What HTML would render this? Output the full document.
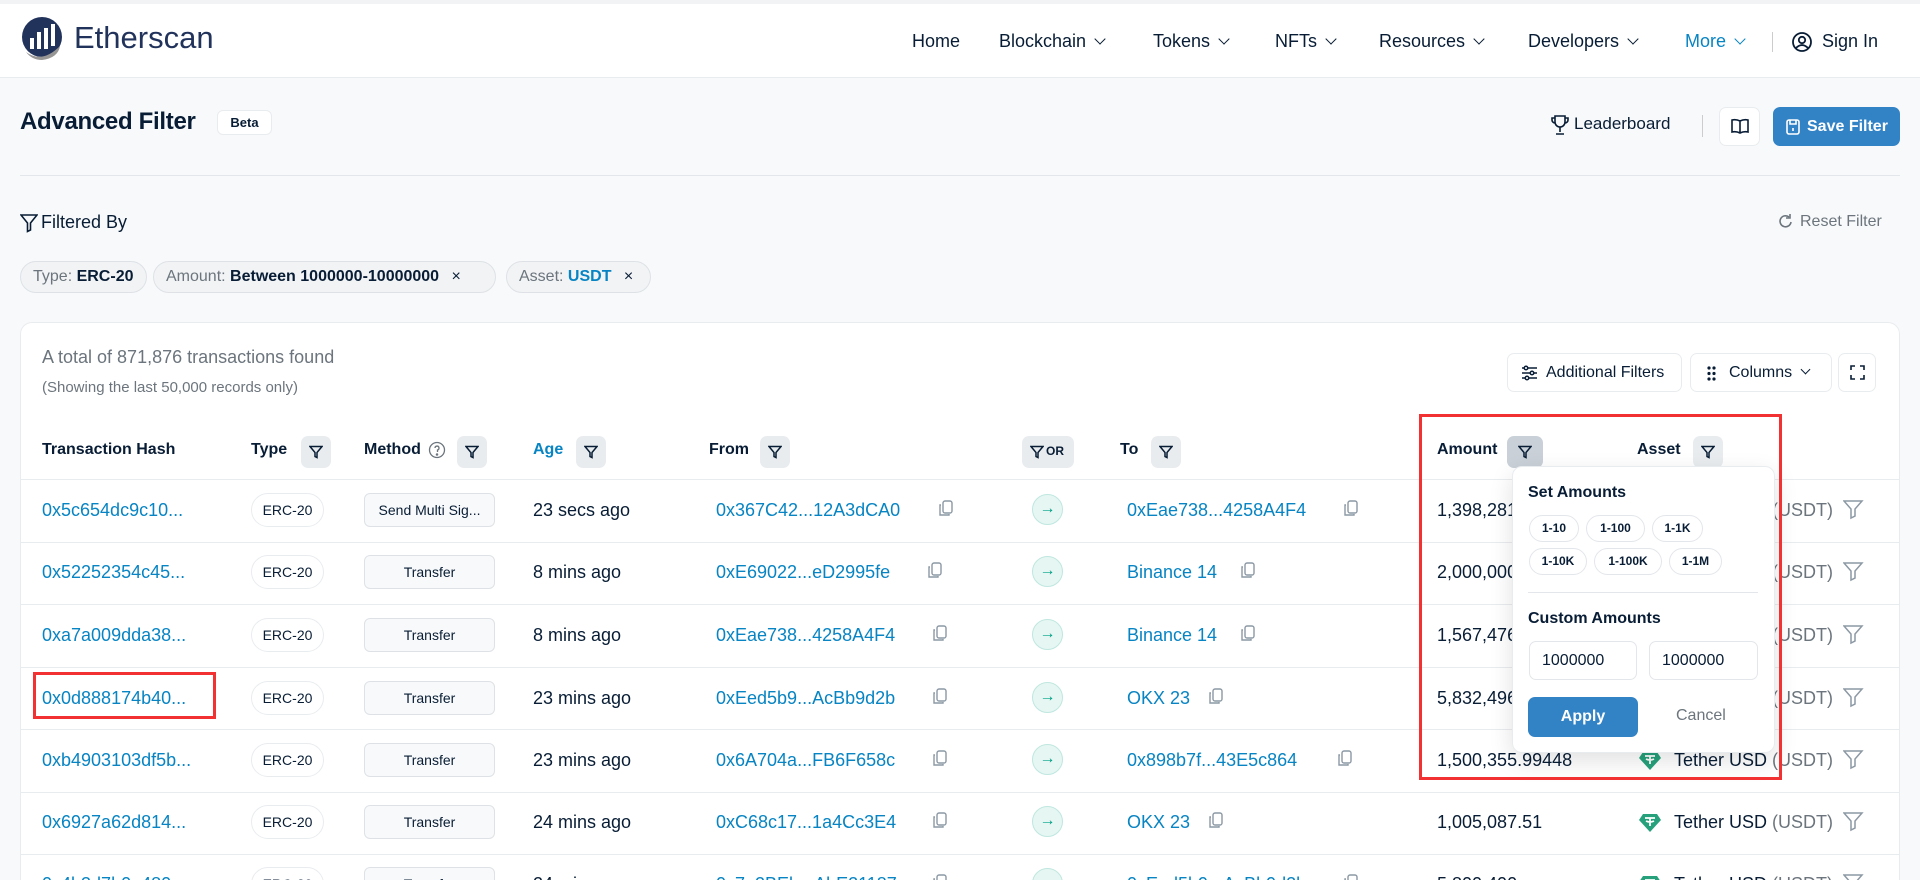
<!DOCTYPE html>
<html style="width:1920px;height:880px;overflow:hidden"><head><meta charset="utf-8">
<style>
*{box-sizing:border-box;margin:0;padding:0}
body{width:1920px;height:880px;overflow:hidden;background:#f8f9fa;font-family:"Liberation Sans",Arial,sans-serif;color:#081d35;position:relative}
.a{position:absolute;white-space:nowrap}
.nav{position:absolute;left:0;top:0;width:1920px;height:78px;background:#fff;border-bottom:1px solid #e9ecef;border-top:4px solid #f1f3f5}
.ni{position:absolute;top:27px;font-size:18px;color:#081d35}
.chev{display:inline-block;width:8px;height:8px;border-right:1.8px solid currentColor;border-bottom:1.8px solid currentColor;transform:rotate(45deg);margin-left:10px;position:relative;top:-4px}
.chip{position:absolute;top:261px;height:32px;border:1px solid #dee2e6;border-radius:16px;background:#f1f3f5;font-size:16px;line-height:30px;padding-left:12px;color:#6c757d}
.chip b{color:#081d35}
.card{position:absolute;left:20px;top:322px;width:1880px;height:558px;background:#fff;border:1px solid #e9ecef;border-bottom:none;border-radius:12px 12px 0 0}
.btn{position:absolute;height:39px;border:1px solid #e9ecef;border-radius:7px;background:#fff;font-size:16px;line-height:37px;color:#081d35}
.th{position:absolute;top:441px;font-size:16px;font-weight:bold;color:#081d35}
.fb{position:absolute;top:436px;width:30px;height:32px;background:#e9ecef;border-radius:7px}
.fb svg{position:absolute;left:8px;top:9px}
.rl{position:absolute;left:20px;width:1880px;height:1px;background:#e9ecef}
.lk{color:#0784c3}
.td{position:absolute;font-size:18px;line-height:22px}
.badge{position:absolute;left:251px;width:73px;height:34px;border:1px solid #e9ecef;border-radius:17px;font-size:14px;text-align:center;line-height:32px;background:#fff}
.meth{position:absolute;left:364px;width:131px;height:34px;border:1px solid #dee2e6;border-radius:6px;font-size:14px;text-align:center;line-height:32px;background:#f8f9fa}
.arr{position:absolute;left:1032px;width:31px;height:31px;border-radius:50%;background:#e6f6f3;border:1px solid #bfe7df;color:#00a186;text-align:center;line-height:28px;font-size:16px}
.cp{position:absolute}
.pill{position:absolute;height:27px;border:1px solid #e3e6ea;border-radius:14px;font-size:12px;font-weight:bold;text-align:center;line-height:25px;background:#fff}
</style></head><body>

<div class="nav">
  <svg class="a" style="left:20px;top:12px" width="46" height="46" viewBox="0 0 46 46">
    <circle cx="22" cy="21" r="20" fill="#21325b"/>
    <path d="M6 36 Q22 48 40 30 Q38 42 22 44 Q12 44 6 36Z" fill="#979695"/>
    <rect x="10" y="22" width="4" height="11" fill="#fff"/><rect x="17" y="16" width="4" height="17" fill="#fff"/><rect x="24" y="12" width="4" height="21" fill="#fff"/><rect x="31" y="8" width="4" height="22" fill="#fff"/>
  </svg>
  <div class="a" style="left:74px;top:16px;font-size:31px;color:#21325b">Etherscan</div>
  <div class="ni" style="left:912px">Home</div>
  <div class="ni" style="left:999px">Blockchain<span class="chev"></span></div>
  <div class="ni" style="left:1153px">Tokens<span class="chev"></span></div>
  <div class="ni" style="left:1275px">NFTs<span class="chev"></span></div>
  <div class="ni" style="left:1379px">Resources<span class="chev"></span></div>
  <div class="ni" style="left:1528px">Developers<span class="chev"></span></div>
  <div class="ni" style="left:1685px;color:#0784c3">More<span class="chev"></span></div>
  <div class="a" style="left:1772px;top:28px;width:1px;height:20px;background:#ccc"></div>
  <svg class="a" style="left:1791px;top:27px" width="22" height="22" viewBox="0 0 22 22" fill="none" stroke="#081d35" stroke-width="1.8"><circle cx="11" cy="11" r="9"/><circle cx="11" cy="9" r="3.2"/><path d="M5 17 Q11 11 17 17"/></svg>
  <div class="ni" style="left:1822px">Sign In</div>
</div>

<div class="a" style="left:20px;top:108px;font-size:24px;font-weight:bold;color:#081d35;letter-spacing:-0.3px">Advanced Filter</div>
<div class="a" style="left:217px;top:110px;width:55px;height:25px;background:#fff;border:1px solid #e9ecef;border-radius:6px;font-size:13px;font-weight:bold;text-align:center;line-height:23px">Beta</div>

<svg class="a" style="left:1550px;top:114px" width="20" height="22" viewBox="0 0 20 22" fill="none" stroke="#081d35" stroke-width="1.6"><path d="M5 2h10v6a5 5 0 0 1-10 0z"/><path d="M5 4H2v2a3 3 0 0 0 3 3M15 4h3v2a3 3 0 0 1-3 3M10 13v5M6 20h8"/></svg>
<div class="a" style="left:1574px;top:114px;font-size:17px">Leaderboard</div>
<div class="a" style="left:1702px;top:115px;width:1px;height:22px;background:#ccc"></div>
<div class="btn" style="left:1719px;top:107px;width:41px"><svg style="position:absolute;left:11px;top:10px" width="18" height="17" viewBox="0 0 18 17" fill="none" stroke="#081d35" stroke-width="1.6"><path d="M9 3Q5 1 1 2v12q4-1 8 1q4-2 8-1V2q-4-1-8 1v12"/></svg></div>
<div class="a" style="left:1773px;top:107px;width:127px;height:39px;background:#3283c6;border-radius:7px;color:#fff;font-size:16px;font-weight:bold;line-height:39px;padding-left:34px">Save Filter
  <svg style="position:absolute;left:13px;top:12px" width="14" height="16" viewBox="0 0 14 16" fill="none" stroke="#fff" stroke-width="1.6"><rect x="1" y="1" width="12" height="14" rx="2"/><path d="M4 1v4h6V1M7 9v3"/></svg></div>

<div class="a" style="left:20px;top:175px;width:1880px;height:1px;background:#e3e6ea"></div>

<svg class="a" style="left:20px;top:213px" width="18" height="20" viewBox="0 0 18 20" fill="none" stroke="#081d35" stroke-width="1.6"><path d="M1 2h16l-6.5 8v7l-3 1.5V10z"/></svg>
<div class="a" style="left:41px;top:212px;font-size:18px">Filtered By</div>
<svg class="a" style="left:1778px;top:213px" width="16" height="17" viewBox="0 0 16 17" fill="none" stroke="#6c757d" stroke-width="1.6"><path d="M13 9a5.5 5.5 0 1 1-2-5"/><path d="M12 1v4H8"/></svg>
<div class="a" style="left:1800px;top:213px;font-size:16px;color:#6c757d">Reset Filter</div>

<div class="chip" style="left:20px;width:127px">Type: <b>ERC-20</b></div>
<div class="chip" style="left:153px;width:343px">Amount: <b>Between 1000000-10000000</b> <span style="color:#081d35;margin-left:8px">×</span></div>
<div class="chip" style="left:506px;width:145px">Asset: <b style="color:#0784c3">USDT</b> <span style="color:#081d35;margin-left:8px">×</span></div>

<div class="card"></div>
<div class="a" style="left:42px;top:347px;font-size:18px;color:#6c757d">A total of 871,876 transactions found</div>
<div class="a" style="left:42px;top:379px;font-size:15px;color:#6c757d">(Showing the last 50,000 records only)</div>

<div class="btn" style="left:1507px;top:353px;width:175px;padding-left:38px">Additional Filters
  <svg style="position:absolute;left:13px;top:11px" width="17" height="16" viewBox="0 0 17 16" fill="none" stroke="#081d35" stroke-width="1.5"><path d="M1 3h15M1 8h15M1 13h15"/><circle cx="5" cy="3" r="1.8" fill="#fff"/><circle cx="11" cy="8" r="1.8" fill="#fff"/><circle cx="6" cy="13" r="1.8" fill="#fff"/></svg></div>
<div class="btn" style="left:1690px;top:353px;width:142px;padding-left:38px">Columns<span class="chev" style="width:7px;height:7px"></span>
  <svg style="position:absolute;left:16px;top:12px" width="10" height="15" viewBox="0 0 10 15" fill="#081d35"><circle cx="2" cy="2" r="1.6"/><circle cx="2" cy="7.5" r="1.6"/><circle cx="2" cy="13" r="1.6"/><circle cx="7" cy="2" r="1.6"/><circle cx="7" cy="7.5" r="1.6"/><circle cx="7" cy="13" r="1.6"/></svg></div>
<div class="btn" style="left:1838px;top:353px;width:38px"><svg style="position:absolute;left:11px;top:11px" width="15" height="15" viewBox="0 0 15 15" fill="none" stroke="#081d35" stroke-width="1.6"><path d="M1 5V1h4M10 1h4v4M14 10v4h-4M5 14H1v-4"/></svg></div>

<!-- header -->
<div class="th" style="left:42px">Transaction Hash</div>
<div class="th" style="left:251px">Type</div>
<div class="th" style="left:364px">Method</div>
<svg class="a" style="left:428px;top:441px" width="18" height="18" viewBox="0 0 18 18" fill="none" stroke="#6c757d" stroke-width="1.3"><circle cx="9" cy="9" r="7.5"/><path d="M7 7a2 2 0 1 1 2.5 2V11"/><circle cx="9" cy="13.5" r=".6" fill="#6c757d"/></svg>
<div class="th" style="left:533px;color:#0784c3">Age</div>
<div class="th" style="left:709px">From</div>
<div class="th" style="left:1120px">To</div>
<div class="th" style="left:1437px">Amount</div>
<div class="th" style="left:1637px">Asset</div>
<div class="fb" style="left:301px"><svg width="14" height="14" viewBox="0 0 14 14" fill="none" stroke="#081d35" stroke-width="1.5"><path d="M1 1.5h12l-5 6v5l-2-1v-4z"/></svg></div>
<div class="fb" style="left:457px"><svg width="14" height="14" viewBox="0 0 14 14" fill="none" stroke="#081d35" stroke-width="1.5"><path d="M1 1.5h12l-5 6v5l-2-1v-4z"/></svg></div>
<div class="fb" style="left:576px"><svg width="14" height="14" viewBox="0 0 14 14" fill="none" stroke="#081d35" stroke-width="1.5"><path d="M1 1.5h12l-5 6v5l-2-1v-4z"/></svg></div>
<div class="fb" style="left:760px"><svg width="14" height="14" viewBox="0 0 14 14" fill="none" stroke="#081d35" stroke-width="1.5"><path d="M1 1.5h12l-5 6v5l-2-1v-4z"/></svg></div>
<div class="fb" style="left:1022px;width:52px"><svg width="14" height="14" viewBox="0 0 14 14" fill="none" stroke="#081d35" stroke-width="1.5"><path d="M1 1.5h12l-5 6v5l-2-1v-4z"/></svg><span style="position:absolute;left:24px;top:8px;font-size:12px;font-weight:bold">OR</span></div>
<div class="fb" style="left:1151px"><svg width="14" height="14" viewBox="0 0 14 14" fill="none" stroke="#081d35" stroke-width="1.5"><path d="M1 1.5h12l-5 6v5l-2-1v-4z"/></svg></div>
<div class="fb" style="left:1507px;width:36px;background:#c9d0d7"><svg style="left:11px" width="14" height="14" viewBox="0 0 14 14" fill="none" stroke="#081d35" stroke-width="1.5"><path d="M1 1.5h12l-5 6v5l-2-1v-4z"/></svg></div>
<div class="fb" style="left:1693px"><svg width="14" height="14" viewBox="0 0 14 14" fill="none" stroke="#081d35" stroke-width="1.5"><path d="M1 1.5h12l-5 6v5l-2-1v-4z"/></svg></div>

<div class="rl" style="top:479px"></div>
<div class="rl" style="top:542px"></div>
<div class="rl" style="top:604px"></div>
<div class="rl" style="top:667px"></div>
<div class="rl" style="top:729px"></div>
<div class="rl" style="top:792px"></div>
<div class="rl" style="top:854px"></div>

<div class="td lk" style="left:42px;top:499px">0x5c654dc9c10...</div>
<div class="badge" style="top:493px">ERC-20</div>
<div class="meth" style="top:493px">Send Multi Sig...</div>
<div class="td" style="left:533px;top:499px">23 secs ago</div>
<div class="td lk" style="left:716px;top:499px">0x367C42...12A3dCA0</div>
<div class="arr" style="top:494px">→</div>
<div class="td lk" style="left:1127px;top:499px">0xEae738...4258A4F4</div>
<div class="td" style="left:1437px;top:499px">1,398,281.60</div>

<div class="td lk" style="left:42px;top:561px">0x52252354c45...</div>
<div class="badge" style="top:555px">ERC-20</div>
<div class="meth" style="top:555px">Transfer</div>
<div class="td" style="left:533px;top:561px">8 mins ago</div>
<div class="td lk" style="left:716px;top:561px">0xE69022...eD2995fe</div>
<div class="arr" style="top:556px">→</div>
<div class="td lk" style="left:1127px;top:561px">Binance 14</div>
<div class="td" style="left:1437px;top:561px">2,000,000</div>

<div class="td lk" style="left:42px;top:624px">0xa7a009dda38...</div>
<div class="badge" style="top:618px">ERC-20</div>
<div class="meth" style="top:618px">Transfer</div>
<div class="td" style="left:533px;top:624px">8 mins ago</div>
<div class="td lk" style="left:716px;top:624px">0xEae738...4258A4F4</div>
<div class="arr" style="top:619px">→</div>
<div class="td lk" style="left:1127px;top:624px">Binance 14</div>
<div class="td" style="left:1437px;top:624px">1,567,476</div>

<div class="td lk" style="left:42px;top:687px">0x0d888174b40...</div>
<div class="badge" style="top:681px">ERC-20</div>
<div class="meth" style="top:681px">Transfer</div>
<div class="td" style="left:533px;top:687px">23 mins ago</div>
<div class="td lk" style="left:716px;top:687px">0xEed5b9...AcBb9d2b</div>
<div class="arr" style="top:682px">→</div>
<div class="td lk" style="left:1127px;top:687px">OKX 23</div>
<div class="td" style="left:1437px;top:687px">5,832,496</div>

<div class="td lk" style="left:42px;top:749px">0xb4903103df5b...</div>
<div class="badge" style="top:743px">ERC-20</div>
<div class="meth" style="top:743px">Transfer</div>
<div class="td" style="left:533px;top:749px">23 mins ago</div>
<div class="td lk" style="left:716px;top:749px">0x6A704a...FB6F658c</div>
<div class="arr" style="top:744px">→</div>
<div class="td lk" style="left:1127px;top:749px">0x898b7f...43E5c864</div>
<div class="td" style="left:1437px;top:749px">1,500,355.99448</div>

<div class="td lk" style="left:42px;top:811px">0x6927a62d814...</div>
<div class="badge" style="top:805px">ERC-20</div>
<div class="meth" style="top:805px">Transfer</div>
<div class="td" style="left:533px;top:811px">24 mins ago</div>
<div class="td lk" style="left:716px;top:811px">0xC68c17...1a4Cc3E4</div>
<div class="arr" style="top:806px">→</div>
<div class="td lk" style="left:1127px;top:811px">OKX 23</div>
<div class="td" style="left:1437px;top:811px">1,005,087.51</div>

<div class="td lk" style="left:42px;top:873px">0x4b3d7b0a480...</div>
<div class="badge" style="top:867px">ERC-20</div>
<div class="meth" style="top:867px">Transfer</div>
<div class="td" style="left:533px;top:873px">24 mins ago</div>
<div class="td lk" style="left:716px;top:873px">0x7a2BEb...AbE21187</div>
<div class="arr" style="top:868px">→</div>
<div class="td lk" style="left:1127px;top:873px">0xEed5b9...AcBb9d2b</div>
<div class="td" style="left:1437px;top:873px">5,800,400</div>

<svg width="0" height="0" style="position:absolute"><defs><g id="cp" fill="none" stroke="#8c98a4" stroke-width="1.4"><rect x="5" y="1" width="9" height="12" rx="2"/><path d="M3 5H2v10h9v-1"/></g></defs></svg>
<svg class="cp" style="left:938px;top:500px" width="18" height="18"><use href="#cp"/></svg>
<svg class="cp" style="left:927px;top:562px" width="18" height="18"><use href="#cp"/></svg>
<svg class="cp" style="left:932px;top:625px" width="18" height="18"><use href="#cp"/></svg>
<svg class="cp" style="left:932px;top:688px" width="18" height="18"><use href="#cp"/></svg>
<svg class="cp" style="left:932px;top:750px" width="18" height="18"><use href="#cp"/></svg>
<svg class="cp" style="left:932px;top:812px" width="18" height="18"><use href="#cp"/></svg>
<svg class="cp" style="left:932px;top:874px" width="18" height="18"><use href="#cp"/></svg>
<svg class="cp" style="left:1343px;top:500px" width="18" height="18"><use href="#cp"/></svg>
<svg class="cp" style="left:1240px;top:562px" width="18" height="18"><use href="#cp"/></svg>
<svg class="cp" style="left:1240px;top:625px" width="18" height="18"><use href="#cp"/></svg>
<svg class="cp" style="left:1208px;top:688px" width="18" height="18"><use href="#cp"/></svg>
<svg class="cp" style="left:1337px;top:750px" width="18" height="18"><use href="#cp"/></svg>
<svg class="cp" style="left:1208px;top:812px" width="18" height="18"><use href="#cp"/></svg>
<svg class="cp" style="left:1343px;top:874px" width="18" height="18"><use href="#cp"/></svg>

<svg width="0" height="0" style="position:absolute"><defs>
<g id="te"><path d="M5 2h14l4 6-11 12L1 8z" fill="#26a17b"/><path d="M7 6h10M12 6v8M8 9q4 2 8 0" stroke="#fff" stroke-width="1.8" fill="none"/></g>
<g id="af" fill="none" stroke="#8c98a4" stroke-width="1.5"><path d="M1 2h18l-7 8v7l-4 2V10z"/></g></defs></svg>
<div class="td" style="left:1674px;top:499px">Tether USD <span style="color:#6c757d">(USDT)</span></div>
<div class="td" style="left:1674px;top:561px">Tether USD <span style="color:#6c757d">(USDT)</span></div>
<div class="td" style="left:1674px;top:624px">Tether USD <span style="color:#6c757d">(USDT)</span></div>
<div class="td" style="left:1674px;top:687px">Tether USD <span style="color:#6c757d">(USDT)</span></div>
<div class="td" style="left:1674px;top:749px">Tether USD <span style="color:#6c757d">(USDT)</span></div>
<div class="td" style="left:1674px;top:811px">Tether USD <span style="color:#6c757d">(USDT)</span></div>
<div class="td" style="left:1674px;top:873px">Tether USD <span style="color:#6c757d">(USDT)</span></div>
<svg class="a" style="left:1638px;top:750px" width="24" height="22"><use href="#te"/></svg>
<svg class="a" style="left:1638px;top:812px" width="24" height="22"><use href="#te"/></svg>
<svg class="a" style="left:1638px;top:874px" width="24" height="22"><use href="#te"/></svg>
<svg class="a" style="left:1843px;top:499px" width="22" height="22"><use href="#af"/></svg>
<svg class="a" style="left:1843px;top:561px" width="22" height="22"><use href="#af"/></svg>
<svg class="a" style="left:1843px;top:624px" width="22" height="22"><use href="#af"/></svg>
<svg class="a" style="left:1843px;top:687px" width="22" height="22"><use href="#af"/></svg>
<svg class="a" style="left:1843px;top:749px" width="22" height="22"><use href="#af"/></svg>
<svg class="a" style="left:1843px;top:811px" width="22" height="22"><use href="#af"/></svg>
<svg class="a" style="left:1843px;top:873px" width="22" height="22"><use href="#af"/></svg>

<div class="a" style="left:1512px;top:466px;width:263px;height:287px;background:#fff;border:1px solid #e9ecef;border-radius:10px;box-shadow:0 8px 24px rgba(0,0,0,0.12)"></div>
<div class="a" style="left:1528px;top:484px;font-size:16px;font-weight:bold">Set Amounts</div>
<div class="pill" style="left:1529px;top:515px;width:50px">1-10</div>
<div class="pill" style="left:1586px;top:515px;width:59px">1-100</div>
<div class="pill" style="left:1652px;top:515px;width:51px">1-1K</div>
<div class="pill" style="left:1529px;top:548px;width:58px">1-10K</div>
<div class="pill" style="left:1594px;top:548px;width:68px">1-100K</div>
<div class="pill" style="left:1669px;top:548px;width:53px">1-1M</div>
<div class="a" style="left:1528px;top:592px;width:230px;height:1px;background:#e3e6ea"></div>
<div class="a" style="left:1528px;top:610px;font-size:16px;font-weight:bold">Custom Amounts</div>
<div class="a" style="left:1529px;top:641px;width:108px;height:39px;border:1px solid #e3e6ea;border-radius:7px;font-size:16px;line-height:37px;padding-left:12px;overflow:hidden">1000000</div>
<div class="a" style="left:1649px;top:641px;width:109px;height:39px;border:1px solid #e3e6ea;border-radius:7px;font-size:16px;line-height:37px;padding-left:12px;overflow:hidden">1000000</div>
<div class="a" style="left:1528px;top:697px;width:110px;height:40px;background:#3283c6;border-radius:7px;color:#fff;font-size:16px;font-weight:bold;text-align:center;line-height:40px">Apply</div>
<div class="a" style="left:1676px;top:707px;font-size:16px;color:#6c757d">Cancel</div>

<div class="a" style="left:1419px;top:414px;width:363px;height:366px;border:3px solid #f23232"></div>
<div class="a" style="left:33px;top:672px;width:183px;height:47px;border:3px solid #f23232"></div>
</body></html>
